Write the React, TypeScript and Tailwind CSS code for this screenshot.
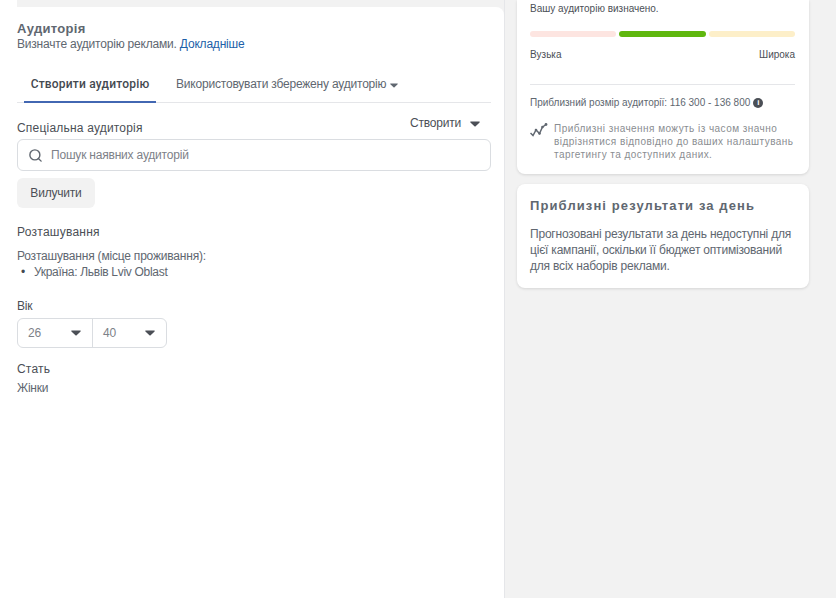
import React from 'react';
import { Search } from 'lucide-react';

const Caret: React.FC<{ className?: string }> = ({ className }) => (
  <svg viewBox="0 0 12 7" className={className} fill="currentColor">
    <path d="M1 0.5h10c.6 0 .9.6.5 1.1L6.8 6.2c-.4.4-1.1.4-1.5 0L.5 1.6C.1 1.1.4.5 1 .5z" />
  </svg>
);

const AudienceCard = () => (
  <div className="flex-1 bg-white rounded-tr-lg pt-[14px] pr-[13px] text-[12px] leading-[15px] tracking-[-0.2px] text-[#606770]">
    <h2 className="text-[13px] leading-[15px] font-bold tracking-[0.3px] text-[#606770]">Аудиторія</h2>
    <p className="mt-px">
      Визначте аудиторію реклами. <span className="text-[#1d5fa8]">Докладніше</span>
    </p>

    <div className="mt-[11px] flex h-[40px] border-b border-[#e5e6e9]">
      <div className="ml-[7px] w-[132px] pt-[5px] flex items-center justify-center border-b-2 border-[#4267b2] h-[40px] font-['Roboto',sans-serif] font-medium tracking-[0.2px] text-[#444950]">
        Створити аудиторію
      </div>
      <div className="ml-[20px] pt-[3px] flex items-center gap-[4px] h-[39px]">
        Використовувати збережену аудиторію
        <Caret className="w-2 h-[5px] mt-0.5 text-[#606770]" />
      </div>
    </div>

    <div className="mt-[12px] flex justify-between items-start h-[22px]">
      <span className="mt-[6px] tracking-[0.2px] text-[#4b4f56]">Спеціальна аудиторія</span>
      <span className="flex items-center gap-[9px] mr-[11px] mt-px text-[#4b4f56]">
        Створити
        <Caret className="w-[10px] h-[6px] text-[#4b4f56]" />
      </span>
    </div>
    <div className="mt-[2px] h-[32px] flex items-center border border-[#dadde1] rounded-md pl-[10px]">
      <Search size={15} strokeWidth={2.25} className="text-[#606770]" />
      <span className="ml-[8px] text-[#7d8188]">Пошук наявних аудиторій</span>
    </div>
    <button className="mt-[7px] block w-[78px] h-[30px] bg-[#f2f2f2] rounded-md text-[#4b4f56] text-[12px]">
      Вилучити
    </button>

    <div className="mt-[17px] tracking-[0.25px] text-[#4b4f56]">Розташування</div>
    <div className="mt-[8px] leading-[16px]">Розташування (місце проживання):</div>
    <div className="flex leading-[16px]">
      <span className="ml-[4px] w-[13px] text-[#444950]">•</span>
      <span className="tracking-[-0.3px]">Україна: Львів Lviv Oblast</span>
    </div>

    <div className="mt-[19px] text-[#4b4f56]">Вік</div>
    <div className="mt-[4px] flex w-[150px] h-[30px] border border-[#dadde1] rounded-md text-[#7d8188]">
      <div className="w-[75px] flex items-center justify-between pl-[10px] pr-[11px] border-r border-[#dadde1]">
        26
        <Caret className="w-[10px] h-[6px] text-[#4b4f56]" />
      </div>
      <div className="flex-1 flex items-center justify-between pl-[10px] pr-[11px]">
        40
        <Caret className="w-[10px] h-[6px] text-[#4b4f56]" />
      </div>
    </div>

    <div className="mt-[14px] tracking-[0.2px] text-[#4b4f56]">Стать</div>
    <div className="mt-[4px]">Жінки</div>
  </div>
);

const TrendIcon = () => (
  <svg viewBox="0 0 18 16" className="w-[18px] h-[16px] shrink-0 text-[#606770]" fill="none" stroke="currentColor" strokeWidth={1.5}>
    <path d="M0.5 11L3 13.500 6 8 9.500 11.500 12.500 5 15.500 3" />
    <circle cx="6" cy="8" r="1.300" fill="currentColor" stroke="none" />
    <circle cx="9.500" cy="11.500" r="1.300" fill="currentColor" stroke="none" />
    <circle cx="12.500" cy="5" r="1.300" fill="currentColor" stroke="none" />
    <circle cx="16" cy="2.500" r="1.400" fill="currentColor" stroke="none" />
  </svg>
);

const SizeCard = () => (
  <div className="h-[174px] bg-white rounded-b-lg shadow-[0_1px_3px_rgba(0,0,0,0.12)] pl-[13px] pr-[14px] pt-[2px] text-[10px] leading-[13px] text-[#4b4f56]">
    <p>Вашу аудиторію визначено.</p>
    <div className="mt-[16px] flex gap-[3px]">
      <div className="flex-1 h-[6px] rounded-full bg-[#fde5e1]" />
      <div className="flex-1 h-[6px] rounded-full bg-[#5fb70e]" />
      <div className="flex-1 h-[6px] rounded-full bg-[#fdefc9]" />
    </div>
    <div className="mt-[11px] flex justify-between">
      <span>Вузька</span>
      <span>Широка</span>
    </div>
    <div className="mt-[23px] border-t border-[#e5e6e9]" />
    <div className="mt-[11px] flex items-center gap-[3px] text-[#606770]">
      <span>
        Приблизний розмір аудиторії: <span className="text-[#606770]">116 300 - 136 800</span>
      </span>
      <span className="w-[10px] h-[10px] rounded-full bg-[#4b4f56] text-white text-[8px] leading-[10px] font-bold text-center">
        i
      </span>
    </div>
    <div className="mt-[13px] flex gap-[6px] text-[#8a8d91]">
      <TrendIcon />
      <p className="tracking-[0.45px]">
        Приблизні значення можуть із часом значно відрізнятися відповідно до ваших налаштувань таргетингу та доступних даних.
      </p>
    </div>
  </div>
);

const ResultsCard = () => (
  <div className="mt-[10px] h-[104px] bg-white rounded-lg shadow-[0_1px_3px_rgba(0,0,0,0.12)] pl-[13px] pr-[14px] pt-[14px]">
    <h3 className="text-[13px] leading-[16px] font-bold tracking-[1.1px] text-[#606770]">Приблизні результати за день</h3>
    <p className="mt-[12px] text-[12px] leading-[16px] tracking-[-0.2px] text-[#606770]">
      Прогнозовані результати за день недоступні для цієї кампанії, оскільки її бюджет оптимізований для всіх наборів реклами.
    </p>
  </div>
);

export default function App() {
  return (
    <div className="h-[598px] w-[836px] overflow-hidden flex bg-[#f2f2f2] font-['Liberation_Sans',sans-serif]">
      <div className="w-[17px] bg-white" />
      <div className="w-[488px] flex flex-col border-r border-[#e5e6e9] pt-[7px]">
        <AudienceCard />
      </div>
      <div className="w-[292px] ml-[12px]">
        <SizeCard />
        <ResultsCard />
      </div>
    </div>
  );
}
